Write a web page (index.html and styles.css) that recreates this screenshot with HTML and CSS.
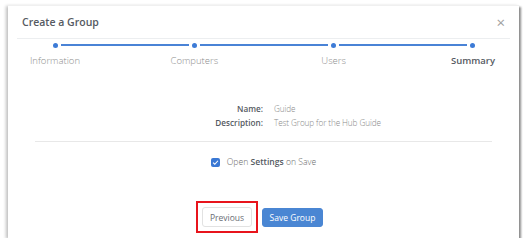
FILE: index.html
```html
<!DOCTYPE html>
<html lang="en">
<head>
  <meta charset="UTF-8">
  <title>Create a Group</title>
  <link rel="stylesheet" href="styles.css">
</head>
<body>
  <div class="dialog">
    <div class="dialog-header">
      <span class="dialog-title">Create a Group</span>
      <span class="close">&times;</span>
    </div>

    <div class="steps">
      <div class="track">
        <span class="dot"></span><span class="line"></span>
        <span class="dot"></span><span class="line"></span>
        <span class="dot"></span><span class="line"></span>
        <span class="dot"></span>
      </div>
      <div class="labels">
        <span class="step">Information</span>
        <span class="step">Computers</span>
        <span class="step">Users</span>
        <span class="step active">Summary</span>
      </div>
    </div>

    <div class="summary">
      <span class="key">Name:</span><span class="val">Guide</span>
      <span class="key">Description:</span><span class="val">Test Group for the Hub Guide</span>
    </div>

    <hr class="divider">

    <label class="check-row">
      <span class="checkbox">
        <svg viewBox="0 0 10 10" width="7" height="7"><path d="M1.5 5.2 L4 7.5 L8.5 2.5" fill="none" stroke="#fff" stroke-width="1.6"/></svg>
      </span>
      <span class="check-text">Open <b>Settings</b> on Save</span>
    </label>

    <div class="actions">
      <button class="btn btn-light">Previous<span class="highlight"></span></button>
      <button class="btn btn-primary">Save Group</button>
    </div>
  </div>
</body>
</html>
```

FILE: styles.css
```css
* {
  box-sizing: border-box;
  margin: 0;
  padding: 0;
}

body {
  font-family: 'Open Sans', sans-serif;
  background: #ffffff;
  color: #555a62;
}

.dialog {
  width: 511px;
  height: 233px;
  margin: 5px 0 0 8px;
  background: #fff;
  border-top: 1px solid #f0f0f0;
  box-shadow: -2px 1px 3px rgba(0, 0, 0, 0.25), 2px 2px 2px rgba(0, 0, 0, 0.45);
}

.dialog-header {
  height: 33px;
  margin: 0 9px;
  padding: 0 5px;
  border-bottom: 1px solid #eceef0;
  display: flex;
  align-items: center;
  justify-content: space-between;
}

.dialog-title {
  font-size: 10.5px;
  font-weight: 600;
  color: #555a62;
}

.close {
  font-size: 15px;
  color: #a0a0a0;
  line-height: 1;
}

.steps {
  margin: 3px 6px 0 7px;
}

.track {
  display: flex;
  align-items: center;
  padding: 0 37.5px;
  height: 6px;
}

.dot {
  width: 5px;
  height: 5px;
  border-radius: 50%;
  background: #3d7bd6;
}

.line {
  flex: 1;
  height: 2px;
  margin: 0 3px;
  background: #4a83d6;
}

.labels {
  display: flex;
  justify-content: space-between;
  margin-top: 6px;
}

.step {
  width: 80px;
  text-align: center;
  font-size: 9.5px;
  line-height: 14px;
  font-weight: 300;
  color: #8e8e8e;
}

.step.active {
  font-weight: 600;
  color: #555a62;
}

.summary {
  display: grid;
  grid-template-columns: 1fr 1fr;
  column-gap: 11px;
  padding-left: 10px;
  margin-top: 34px;
  font-size: 8.2px;
  line-height: 14px;
}

.key {
  text-align: right;
  font-weight: 600;
  color: #555a62;
}

.val {
  font-weight: 300;
  color: #8a8a8a;
  letter-spacing: -0.1px;
}

.divider {
  border: none;
  border-top: 1px solid #e8e8e8;
  margin: 11px 27px 0;
}

.check-row {
  display: flex;
  align-items: center;
  justify-content: center;
  gap: 7px;
  margin-top: 13px;
  font-size: 8.6px;
  line-height: 14px;
  font-weight: 300;
  color: #6a6a6a;
}

.check-text b {
  font-weight: 600;
  color: #555a62;
}

.checkbox {
  width: 9px;
  height: 9px;
  border-radius: 2px;
  background: #3a78d4;
  display: flex;
  align-items: center;
  justify-content: center;
}

.actions {
  display: flex;
  justify-content: center;
  gap: 10px;
  margin-top: 38px;
  padding-right: 2px;
}

.btn {
  font-family: 'Open Sans', sans-serif;
  font-size: 8.5px;
  height: 20px;
  border-radius: 3px;
  cursor: pointer;
}

.btn-light {
  position: relative;
  width: 50px;
  background: #fff;
  border: 1px solid #e2e2e2;
  color: #6a6e75;
}

.btn-primary {
  width: 61px;
  height: 19px;
  margin-top: 1px;
  background: #4a86d3;
  border: 1px solid #4a86d3;
  color: #fff;
}

.highlight {
  position: absolute;
  left: -7px;
  top: -7px;
  width: 62px;
  height: 32px;
  border: 2px solid #e8141c;
}
```
